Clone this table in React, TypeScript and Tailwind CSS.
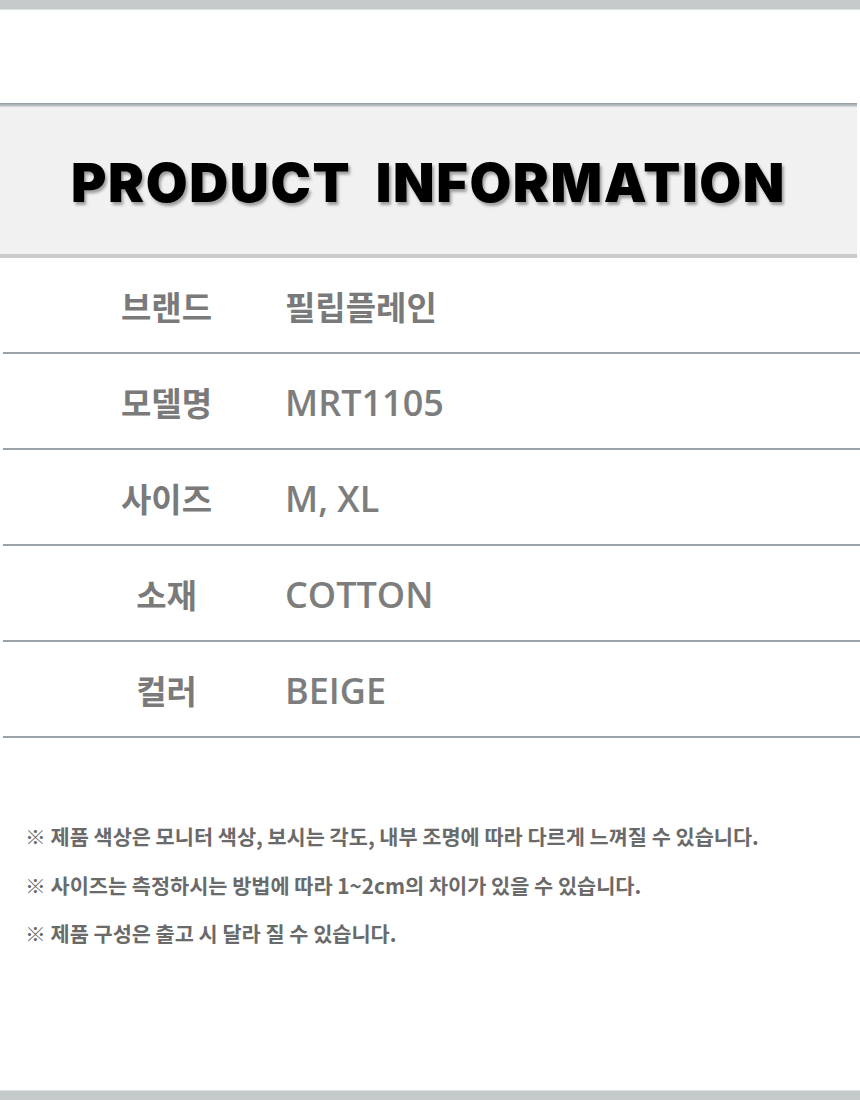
import React from 'react';

const rows = [
  { label: '브랜드', value: '필립플레인', korean: true },
  { label: '모델명', value: 'MRT1105' },
  { label: '사이즈', value: 'M, XL' },
  { label: '소재', value: 'COTTON' },
  { label: '컬러', value: 'BEIGE' },
];

const notes = [
  '※ 제품 색상은 모니터 색상, 보시는 각도, 내부 조명에 따라 다르게 느껴질 수 있습니다.',
  '※ 사이즈는 측정하시는 방법에 따라 1~2cm의 차이가 있을 수 있습니다.',
  '※ 제품 구성은 출고 시 달라 질 수 있습니다.',
];

const krFont = "font-['Noto_Sans_CJK_KR',sans-serif]";

const App = () => {
  return (
    <div className="w-[860px] h-[1100px] bg-white flex flex-col overflow-hidden">
      {/* top bar */}
      <div className="h-[9px] bg-[#c4c9ca] shrink-0" />
      <div className="h-px bg-[#dde0e0] shrink-0" />

      <div className="h-[93px] shrink-0" />

      {/* title band */}
      <div className="w-[857px] shrink-0 flex flex-col">
        <div className="h-[4px] bg-gradient-to-b from-[#8d989d] to-[#d6dadb]" />
        <div className="h-[147px] bg-[#f1f1f1] flex items-center justify-center pt-[4px]">
          <h1 className="font-['Inter',sans-serif] font-black text-[54px] leading-none text-black tracking-[1.6px] [text-shadow:2px_3px_3px_rgba(0,0,0,0.35)] whitespace-pre">
            PRODUCT  INFORMATION
          </h1>
        </div>
        <div className="h-[4px] bg-[#cbcbcb]" />
      </div>

      {/* info rows */}
      <div className="flex flex-col shrink-0">
        {rows.map((row) => (
          <div key={row.label} className="flex flex-col">
            <div className="h-[94px] flex items-center pt-[3px]">
              <div className={`w-[285px] pl-[48px] text-center text-[33px] font-bold text-[#7a7a7a] leading-none ${krFont}`}>
                {row.label}
              </div>
              <div
                className={
                  row.korean
                    ? `text-[33px] font-bold text-[#7a7a7a] leading-none ${krFont}`
                    : "font-['Open_Sans',sans-serif] font-semibold text-[36px] text-[#7d7d7d] leading-none"
                }
              >
                {row.value}
              </div>
            </div>
            <div className="ml-[3px] h-[2px] bg-[#9aa3a7]" />
          </div>
        ))}
      </div>

      {/* notes */}
      <div className={`flex flex-col gap-[20px] pl-[25px] pt-[84px] ${krFont} text-[20.8px] font-bold text-[#6a6a6a] leading-[28.5px]`}>
        {notes.map((n) => (
          <p key={n}>{n}</p>
        ))}
      </div>

      <div className="flex-1" />
      {/* bottom bar */}
      <div className="h-px bg-[#e2e4e4] shrink-0" />
      <div className="h-[9px] bg-[#c4c9ca] shrink-0" />
    </div>
  );
};

export default App;
